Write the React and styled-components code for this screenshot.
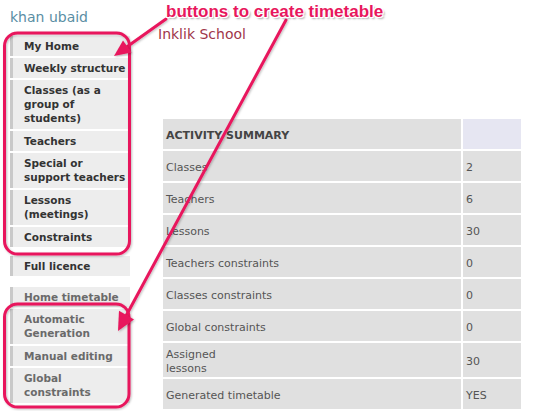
import React from "react";
import styled, { createGlobalStyle } from "styled-components";

const Global = createGlobalStyle`
  html, body { margin: 0; padding: 0; background: #fff; }
  body { font-family: "DejaVu Sans", Verdana, sans-serif; }
  * { box-sizing: border-box; }
`;

const Page = styled.div`
  position: relative;
  width: 548px;
  height: 411px;
  overflow: hidden;
  padding: 9px 8px 0 8px;
`;

const UserName = styled.div`
  font-size: 14px;
  line-height: 17px;
  color: #5a8ea4;
  padding-left: 2px;
`;

const Columns = styled.div`
  display: flex;
  align-items: flex-start;
`;

const Sidebar = styled.nav`
  width: 120px;
  margin: 10px 0 0 2px;
  display: flex;
  flex-direction: column;
`;

const Group = styled.div`
  display: flex;
  flex-direction: column;
  gap: 2px;
  margin-bottom: ${(p) => p.$after || 0}px;
`;

const MenuItem = styled.div`
  background: #ededed;
  border-left: 3px solid #c9c9c9;
  padding: ${(p) => (p.$tall ? "3px 2px 4px 11px" : "3px 2px 3px 11px")};
  font-size: 10.5px;
  line-height: 14px;
  font-weight: bold;
  color: ${(p) => (p.$muted ? "#6a6a6a" : "#333")};
`;

const Main = styled.main`
  margin-left: 28px;
  display: flex;
  flex-direction: column;
`;

const School = styled.div`
  font-size: 14px;
  line-height: 17px;
  color: #a0364a;
`;

const Summary = styled.table`
  margin: 74px 0 0 3px;
  border-collapse: separate;
  border-spacing: 2px;
  table-layout: fixed;
  width: 362px;
  font-size: 11px;
`;

const Cell = styled.td`
  width: ${(p) => p.$w}px;
  height: 30px;
  padding: 5px 3px 2px;
  line-height: 13.5px;
  vertical-align: middle;
  background: ${(p) => (p.$lav ? "#e6e6f2" : "#e0e0e0")};
  color: ${(p) => (p.$head ? "#444" : "#555")};
  font-weight: ${(p) => (p.$head ? "bold" : "normal")};
`;

const Overlay = styled.svg`
  position: absolute;
  left: 0;
  top: 0;
  pointer-events: none;
  overflow: visible;
`;

const Callout = styled.div`
  position: absolute;
  left: 166px;
  top: 2px;
  font-family: "Liberation Sans", Arial, sans-serif;
  font-weight: bold;
  font-size: 17px;
  line-height: 20px;
  color: #e8175d;
  white-space: nowrap;
  text-shadow:
    -1px 0 0 #fff, 1px 0 0 #fff, 0 -1px 0 #fff, 0 1px 0 #fff,
    1px 1px 0 #fff, -1px -1px 0 #fff, 1px -1px 0 #fff, -1px 1px 0 #fff,
    2px 2px 2px rgba(0, 0, 0, 0.35);
`;

const menuTop = [
  { label: "My Home" },
  { label: "Weekly structure" },
  { label: "Classes (as a group of students)", tall: true },
  { label: "Teachers" },
  { label: "Special or support teachers", tall: true },
  { label: "Lessons (meetings)", tall: true },
  { label: "Constraints" },
];

const menuBottom = [
  { label: "Home timetable" },
  { label: "Automatic Generation", tall: true },
  { label: "Manual editing" },
  { label: "Global constraints", tall: true },
];

const rows = [
  ["Classes", "2"],
  ["Teachers", "6"],
  ["Lessons", "30"],
  ["Teachers constraints", "0"],
  ["Classes constraints", "0"],
  ["Global constraints", "0"],
  [
    <>
      Assigned
      <br />
      lessons
    </>,
    "30",
  ],
  ["Generated timetable", "YES"],
];

const PINK = "#e8175d";

function Annotations() {
  return (
    <Overlay width="548" height="411" viewBox="0 0 548 411">
      <defs>
        <filter id="sh" x="-10%" y="-10%" width="120%" height="120%">
          <feDropShadow dx="1" dy="1" stdDeviation="1" floodColor="#000" floodOpacity="0.25" />
        </filter>
      </defs>
      <g filter="url(#sh)" fill="none" stroke={PINK} strokeWidth="3">
        <rect x="4.5" y="33" width="125" height="221" rx="13" />
        <rect x="4.5" y="304" width="124.5" height="103" rx="13" />
        <line x1="166" y1="19" x2="127" y2="46.7" strokeLinecap="round" />
        <line x1="286" y1="20" x2="126.5" y2="315" strokeLinecap="round" />
      </g>
      <g filter="url(#sh)" fill={PINK} stroke="none">
        <polygon points="114,56 131.5,52.4 123,40.5" />
        <polygon points="118,331 134,319.5 119,310.8" />
      </g>
    </Overlay>
  );
}

export default function App() {
  return (
    <>
      <Global />
      <Page>
        <UserName>khan ubaid</UserName>
        <Columns>
          <Sidebar>
            <Group $after={9}>
              {menuTop.map((m) => (
                <MenuItem key={m.label} $tall={m.tall}>
                  {m.label}
                </MenuItem>
              ))}
            </Group>
            <Group $after={11}>
              <MenuItem>Full licence</MenuItem>
            </Group>
            <Group>
              {menuBottom.map((m) => (
                <MenuItem key={m.label} $tall={m.tall} $muted>
                  {m.label}
                </MenuItem>
              ))}
            </Group>
          </Sidebar>
          <Main>
            <School>Inklik School</School>
            <Summary>
              <tbody>
                <tr>
                  <Cell $w={298} $head>
                    ACTIVITY SUMMARY
                  </Cell>
                  <Cell $w={58} $lav />
                </tr>
                {rows.map(([k, v], i) => (
                  <tr key={i}>
                    <Cell $w={298}>{k}</Cell>
                    <Cell $w={58}>{v}</Cell>
                  </tr>
                ))}
              </tbody>
            </Summary>
          </Main>
        </Columns>
        <Annotations />
        <Callout>buttons to create timetable</Callout>
      </Page>
    </>
  );
}
